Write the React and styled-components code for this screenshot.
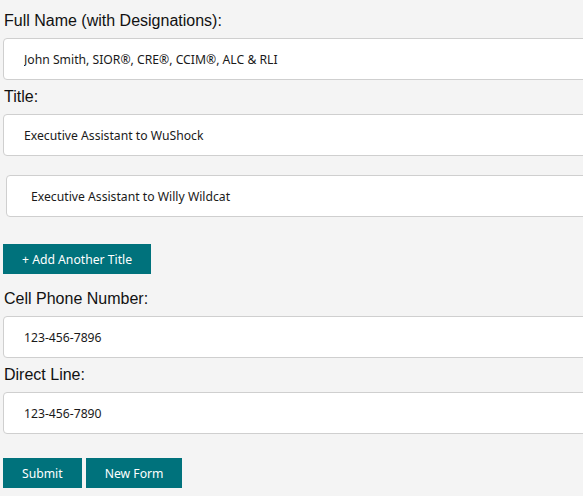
import React, { useState } from 'react'
import styled, { createGlobalStyle } from 'styled-components'

const GlobalStyle = createGlobalStyle`
  html, body {
    margin: 0;
    padding: 0;
    background: #f4f4f4;
    overflow: hidden;
  }
`

const Form = styled.form`
  display: flex;
  flex-direction: column;
  align-items: flex-start;
  padding: 12px 0 0 3px;
  width: 640px;
`

const Label = styled.label`
  font-family: 'Liberation Sans', Arial, sans-serif;
  font-size: 16px;
  line-height: 18px;
  color: #111;
  margin: ${p => p.$first ? '0' : '8px'} 0 8px 1px;
`

const Input = styled.input`
  box-sizing: border-box;
  width: 620px;
  height: 42px;
  margin-left: ${p => p.$indent || 0}px;
  margin-top: ${p => p.$gap || 0}px;
  padding: 0 0 0 ${p => p.$pad || 20}px;
  border: 1px solid #cfcfcf;
  border-radius: 4px;
  background: #fff;
  font-family: 'Noto Sans', Tahoma, sans-serif;
  font-size: 12.2px;
  color: #1a1a1a;
  outline: none;
`

const Button = styled.button`
  height: 30px;
  padding: 0 19px;
  border: none;
  background: #00727c;
  color: #fff;
  font-family: 'Noto Sans', Tahoma, sans-serif;
  font-size: 12.2px;
  cursor: pointer;
  &:hover { background: #005a62; }
`

const AddButton = styled(Button)`
  margin-top: 27px;
  margin-bottom: 8px;
`

const Actions = styled.div`
  display: flex;
  gap: 4px;
  margin-top: 24px;
`

const App = () => {
  const [datos, setDatos] = useState({
    nombre: 'John Smith, SIOR®, CRE®, CCIM®, ALC & RLI',
    titulo1: 'Executive Assistant to WuShock',
    titulo2: 'Executive Assistant to Willy Wildcat',
    celular: '123-456-7896',
    directo: '123-456-7890'
  })

  const handleChange = e => setDatos({ ...datos, [e.target.name]: e.target.value })

  return (
    <>
      <GlobalStyle />
      <Form onSubmit={e => e.preventDefault()}>
        <Label $first htmlFor="nombre">Full Name (with Designations):</Label>
        <Input id="nombre" name="nombre" value={datos.nombre} onChange={handleChange} />

        <Label htmlFor="titulo1">Title:</Label>
        <Input id="titulo1" name="titulo1" value={datos.titulo1} onChange={handleChange} />
        <Input name="titulo2" value={datos.titulo2} onChange={handleChange} $indent={3} $gap={19} $pad={24} />

        <AddButton type="button">+ Add Another Title</AddButton>

        <Label htmlFor="celular">Cell Phone Number:</Label>
        <Input id="celular" name="celular" value={datos.celular} onChange={handleChange} />

        <Label htmlFor="directo">Direct Line:</Label>
        <Input id="directo" name="directo" value={datos.directo} onChange={handleChange} />

        <Actions>
          <Button type="submit">Submit</Button>
          <Button type="button">New Form</Button>
        </Actions>
      </Form>
    </>
  )
}

export default App
